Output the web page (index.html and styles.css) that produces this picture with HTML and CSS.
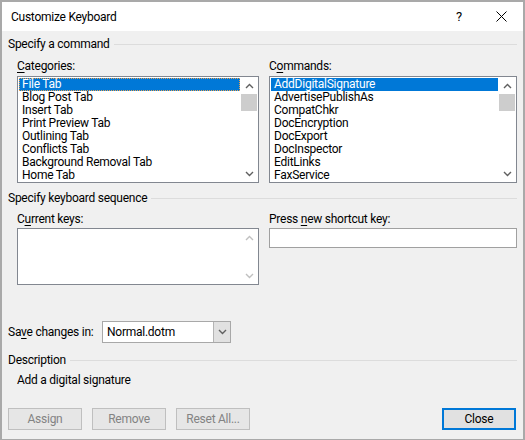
FILE: index.html
```html
<!DOCTYPE html>
<html lang="en">

<head>
    <meta charset="UTF-8">
    <meta name="viewport" content="width=device-width, initial-scale=1.0">
    <title>Customize Keyboard</title>

    <link rel="stylesheet" href="styles.css">
</head>

<body>
    <div class="window">
        <div class="titlebar">
            <span class="title">Customize Keyboard</span>
            <span class="help">?</span>
            <span class="close">
                <svg width="11" height="11" viewBox="0 0 11 11">
                    <path d="M0.5 0.5 L10.5 10.5 M10.5 0.5 L0.5 10.5" stroke="#000" stroke-width="1" fill="none" />
                </svg>
            </span>
        </div>

        <div class="content">
            <div class="group-head"><span>Specify a command</span></div>

            <div class="columns lists">
                <div class="field">
                    <div class="label"><u>C</u>ategories:</div>
                    <div class="listbox">
                        <ul class="items">
                            <li class="selected focused">File Tab</li>
                            <li>Blog Post Tab</li>
                            <li>Insert Tab</li>
                            <li>Print Preview Tab</li>
                            <li>Outlining Tab</li>
                            <li>Conflicts Tab</li>
                            <li>Background Removal Tab</li>
                            <li>Home Tab</li>
                        </ul>
                        <div class="scrollbar">
                            <span class="arrow"><svg width="9" height="6" viewBox="0 0 9 6"><path d="M1 5 L4.5 1.5 L8 5" /></svg></span>
                            <span class="thumb"></span>
                            <span class="track"></span>
                            <span class="arrow"><svg width="9" height="6" viewBox="0 0 9 6"><path d="M1 1 L4.5 4.5 L8 1" /></svg></span>
                        </div>
                    </div>
                </div>

                <div class="field">
                    <div class="label">C<u>o</u>mmands:</div>
                    <div class="listbox">
                        <ul class="items">
                            <li class="selected">AddDigitalSignature</li>
                            <li>AdvertisePublishAs</li>
                            <li>CompatChkr</li>
                            <li>DocEncryption</li>
                            <li>DocExport</li>
                            <li>DocInspector</li>
                            <li>EditLinks</li>
                            <li>FaxService</li>
                        </ul>
                        <div class="scrollbar">
                            <span class="arrow"><svg width="9" height="6" viewBox="0 0 9 6"><path d="M1 5 L4.5 1.5 L8 5" /></svg></span>
                            <span class="thumb"></span>
                            <span class="track"></span>
                            <span class="arrow"><svg width="9" height="6" viewBox="0 0 9 6"><path d="M1 1 L4.5 4.5 L8 1" /></svg></span>
                        </div>
                    </div>
                </div>
            </div>

            <div class="group-head second"><span>Specify keyboard sequence</span></div>

            <div class="columns keys">
                <div class="field">
                    <div class="label">C<u>u</u>rrent keys:</div>
                    <div class="listbox keybox">
                        <ul class="items"></ul>
                        <div class="scrollbar disabled">
                            <span class="arrow"><svg width="9" height="6" viewBox="0 0 9 6"><path d="M1 5 L4.5 1.5 L8 5" /></svg></span>
                            <span class="track"></span>
                            <span class="arrow"><svg width="9" height="6" viewBox="0 0 9 6"><path d="M1 1 L4.5 4.5 L8 1" /></svg></span>
                        </div>
                    </div>
                </div>

                <div class="field">
                    <div class="label">Press <u>n</u>ew shortcut key:</div>
                    <div class="textbox"></div>
                </div>
            </div>

            <div class="save-row">
                <span class="save-label">Sa<u>v</u>e changes in:</span>
                <div class="combo">
                    <span class="combo-value">Normal.dotm</span>
                    <span class="combo-btn"><svg width="9" height="6" viewBox="0 0 9 6"><path d="M1 1 L4.5 4.5 L8 1" /></svg></span>
                </div>
            </div>

            <div class="group-head third"><span>Description</span></div>
            <div class="description">Add a digital signature</div>

            <div class="buttons">
                <button class="btn" disabled>Assign</button>
                <button class="btn" disabled>Remove</button>
                <button class="btn" disabled>Reset All...</button>
                <span class="spacer"></span>
                <button class="btn default">Close</button>
            </div>
        </div>
    </div>
</body>

</html>
```

FILE: styles.css
```css
body {
    margin: 0;
    font-family: Roboto, "Liberation Sans", sans-serif;
    font-size: 12px;
    letter-spacing: -0.25px;
    color: #000;
    background: #fff;
}

.window {
    box-sizing: border-box;
    width: 525px;
    height: 440px;
    border: 2px solid #a9a9a9;
    border-bottom-width: 1px;
    background: #f0f0f0;
    display: flex;
    flex-direction: column;
}

.titlebar {
    display: flex;
    align-items: center;
    height: 29px;
    background: #fff;
    padding-left: 9px;
}

.title {
    flex: 1;
    font-size: 12px;
}

.help {
    width: 40px;
    font-size: 13px;
    text-align: left;
    padding-left: 1px;
}

.close {
    display: flex;
    width: 25px;
    padding-right: 2px;
}

.content {
    padding: 6px 6px 0 6px;
}

.group-head {
    display: flex;
    align-items: center;
    gap: 4px;
    height: 14px;
    line-height: 14px;
}

.group-head::after {
    content: "";
    flex: 1;
    height: 1px;
    background: #dcdcdc;
}

.group-head.second {
    margin-top: 8px;
}

.group-head.third {
    margin-top: 10px;
}

.columns {
    display: grid;
    grid-template-columns: 242px 248px;
    gap: 10px;
    padding-left: 9px;
}

.lists {
    margin-top: 8px;
}

.keys {
    margin-top: 7px;
}

.label {
    height: 14px;
    line-height: 14px;
}

u {
    text-decoration-thickness: 1px;
    text-underline-offset: 2px;
}

.listbox {
    display: flex;
    box-sizing: border-box;
    height: 107px;
    margin-top: 3px;
    border: 1px solid #828790;
    background: #fff;
}

.items {
    flex: 1;
    margin: 0;
    padding: 0 1px 0 1px;
    list-style: none;
}

.items li {
    height: 13px;
    line-height: 13px;
    padding: 0 0 0 3px;
    white-space: nowrap;
}

.items li:first-child {
    margin-top: 1px;
}

.items li.selected {
    background: #0078d7;
    color: #fff;
}

.items li.focused {
    outline: 1px dotted #e8a050;
    outline-offset: -1px;
}

.scrollbar {
    display: flex;
    flex-direction: column;
    width: 16px;
    margin-right: 1px;
    background: #fff;
}

.arrow {
    display: flex;
    align-items: center;
    justify-content: center;
    height: 17px;
}

.arrow svg path,
.combo-btn svg path {
    fill: none;
    stroke: #606060;
    stroke-width: 1.4;
}

.thumb {
    height: 17px;
    background: #cdcdcd;
}

.track {
    flex: 1;
}

.scrollbar.disabled .arrow svg path {
    stroke: #c0c0c0;
}

.keybox {
    height: 57px;
    margin-top: 2px;
}

.textbox {
    box-sizing: border-box;
    height: 20px;
    margin-top: 2px;
    border: 1px solid #a0a0a0;
    background: #fff;
}

.save-row {
    display: flex;
    align-items: center;
    margin-top: 36px;
    height: 22px;
}

.save-label {
    width: 94px;
}

.combo {
    display: flex;
    box-sizing: border-box;
    width: 129px;
    height: 22px;
    border: 1px solid #a8a8a8;
    background: #fff;
}

.combo-value {
    flex: 1;
    line-height: 20px;
    padding-left: 4px;
}

.combo-btn {
    display: flex;
    align-items: center;
    justify-content: center;
    width: 16px;
    background: #e1e1e1;
    border-left: 1px solid #b4b4b4;
}

.description {
    margin-top: 6px;
    padding-left: 9px;
    height: 14px;
    line-height: 14px;
}

.buttons {
    display: flex;
    gap: 10px;
    margin-top: 21px;
}

.spacer {
    flex: 1;
}

.btn {
    all: unset;
    box-sizing: border-box;
    width: 74px;
    height: 22px;
    text-align: center;
    line-height: 20px;
    border: 1px solid #adadad;
    background: #e1e1e1;
    font-family: Roboto, "Liberation Sans", sans-serif;
    font-size: 12px;
    letter-spacing: -0.25px;
}

.btn:disabled {
    border-color: #bfbfbf;
    background: #e6e6e6;
    color: #838383;
}

.btn.default {
    border: 2px solid #0078d7;
    line-height: 18px;
    margin-right: 1px;
}
```
